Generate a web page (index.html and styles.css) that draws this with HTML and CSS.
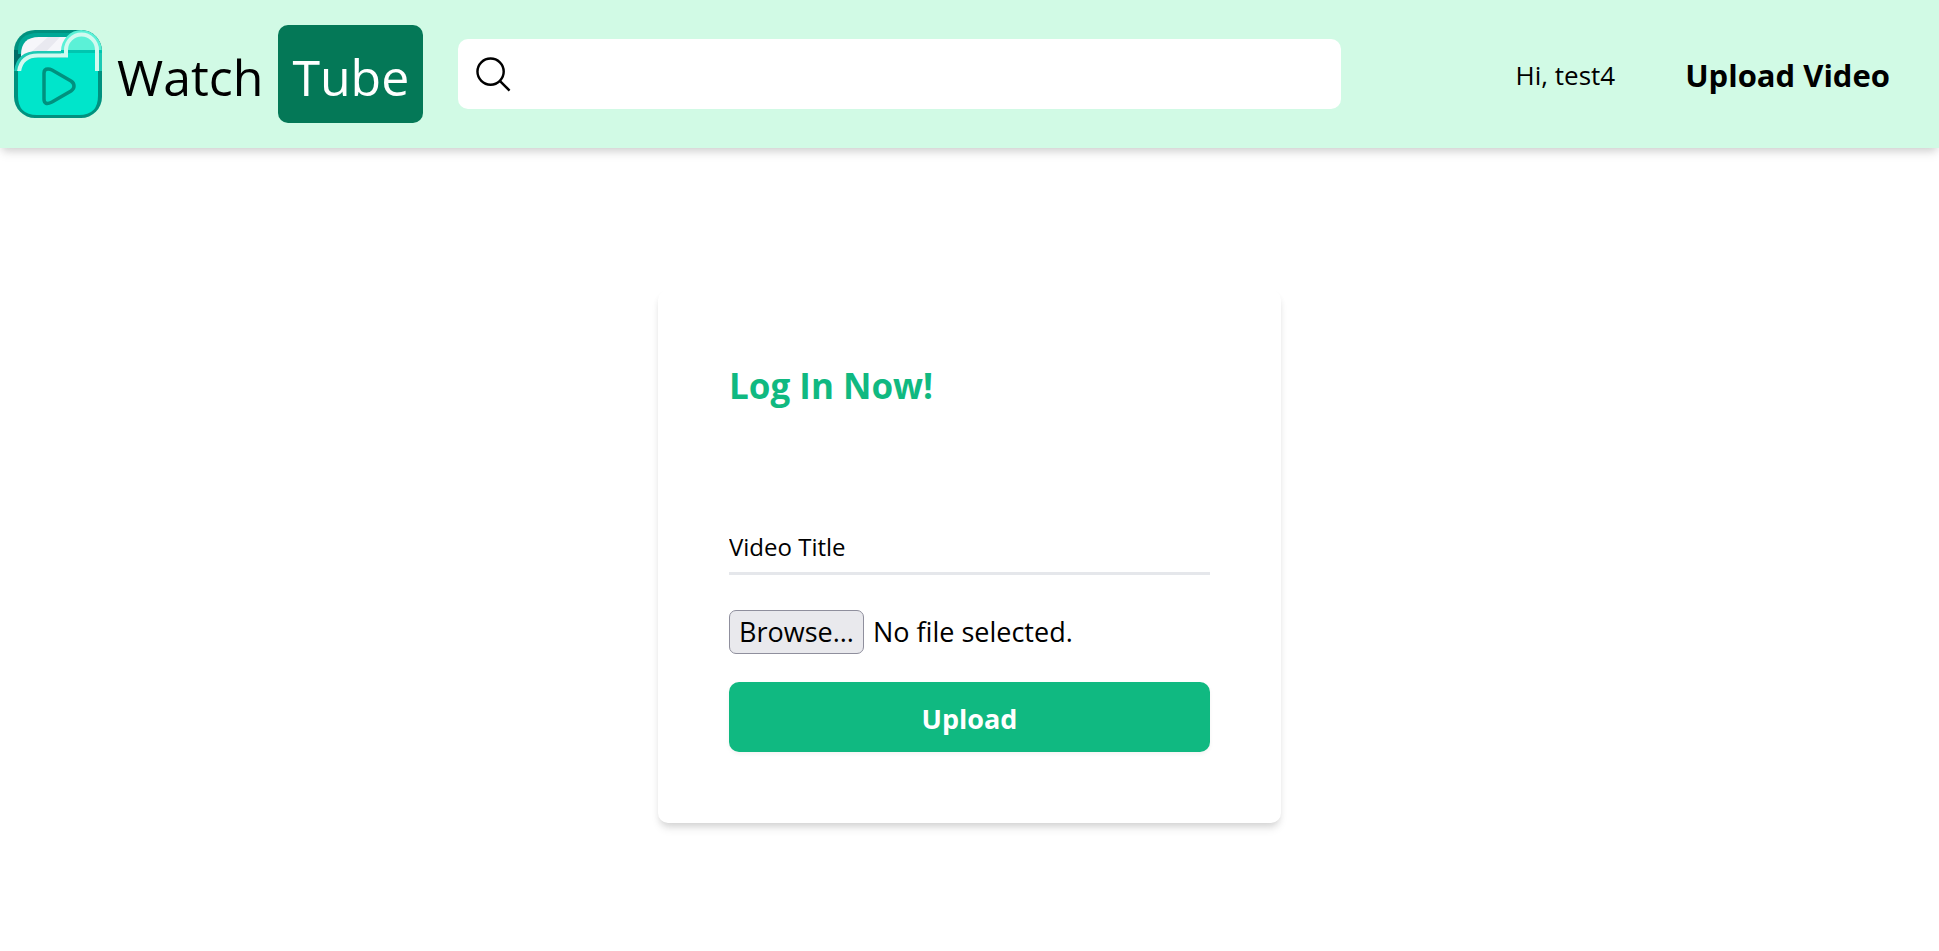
FILE: index.html
```html
<!DOCTYPE html>
<html lang="en">
<head>
<meta charset="utf-8">
<title>Watch Tube</title>
<link rel="stylesheet" href="styles.css">
</head>
<body>
<header class="navbar">
  <a class="brand" href="#">
    <svg class="brand-logo" viewBox="0 0 88 88" aria-hidden="true">
      <defs>
        <clipPath id="tile"><rect width="88" height="88" rx="21"/></clipPath>
        <clipPath id="upper"><rect width="88" height="41"/></clipPath>
      </defs>
      <g clip-path="url(#tile)">
        <rect width="88" height="88" fill="#00917f"/>
        <rect y="20" width="30" height="21" fill="#006d68"/>
        <path d="M4 21Q4 3 24 3H66V24H4z" fill="#00a896"/>
        <path d="M7 26V25Q7 7 25 7H60V30H7z" fill="#f6f6fa"/>
        <path d="M34 7H46L30 24H15z" fill="#e9e9f0"/>
        <path d="M4 42Q4 25 23 25H52Q52 8 68 8T84 24V66Q84 85 65 85H23Q4 85 4 66z" fill="#00e5cb"/>
        <g clip-path="url(#upper)">
          <path d="M0 42Q2 21 24 21H52V28H24Q7 28 5 42z" fill="#1cc9b4"/>
          <path d="M47 24V21a20.500 21 0 0 1 41 0V41H82V21H52V24z" fill="#5bf1d7"/>
          <path d="M52 21V19a15 15 0 0 1 30 0V21z" fill="#5bf1d7"/>
          <rect x="47" y="20" width="41" height="3" fill="#00c6b0"/>
          <rect x="84" y="23" width="4" height="19" fill="#1cc9b4"/>
          <path d="M5 42Q7 25.500 24 25.500H52V20a15.500 15.500 0 0 1 31 0V42" fill="none" stroke="#d1faf0" stroke-width="4"/>
        </g>
        <path d="M30 43Q30 39 34 39Q36 39 38 40L57 51Q60 53 60 56T57 61L38 72Q30 76 30 69z" fill="none" stroke="#00917f" stroke-width="3.500"/>
      </g>
    </svg>
    <span class="brand-first">Watch</span>
    <span class="brand-second">Tube</span>
  </a>
  <form class="search" role="search">
    <label for="q"><svg class="search-icon" viewBox="0 0 36 36" role="img" aria-label="Search"><circle cx="15" cy="15" r="13.500"/><path d="M25 25L34.500 34.500"/></svg></label>
    <input class="search-input" id="q" type="search">
  </form>
  <nav class="links">
    <span class="greeting">Hi, test4</span>
    <a class="upload-link" href="#">Upload Video</a>
  </nav>
</header>
<main class="page">
  <form class="card">
    <h1 class="card-title">Log In Now!</h1>
    <input class="title-input" type="text" placeholder="Video Title" aria-label="Video Title">
    <label class="file">
      <input class="file-input" type="file">
      <span class="file-button">Browse...</span>
      <span class="file-name">No file selected.</span>
    </label>
    <button class="submit" type="button">Upload</button>
  </form>
</main>
</body>
</html>
```

FILE: styles.css
```css
* { box-sizing: border-box; }
body {
  margin: 0;
  min-height: 100vh;
  display: flex;
  flex-direction: column;
  background: #fff;
  color: #000;
  font-family: "Open Sans", "Noto Sans", sans-serif;
  font-size: 27px;
  line-height: 42px;
}
a { color: inherit; text-decoration: none; }
input, button { font: inherit; color: inherit; }

.navbar {
  display: flex;
  align-items: center;
  padding: 25px 49px 25px 14px;
  background: #d1fae5;
  box-shadow: 0 7px 10px -2px rgb(0 0 0 / 0.1), 0 4px 7px -2px rgb(0 0 0 / 0.1);
}
.brand {
  display: flex;
  align-items: center;
  font-size: 50px;
  line-height: 70px;
}
.brand-logo { width: 88px; height: 88px; }
.brand-first { margin: 6px 15px 0; }
.brand-second {
  padding: 17px 14px 11px;
  border-radius: 10px;
  background: #047857;
  color: #fff;
}
.search {
  flex: 0 1 883px;
  display: flex;
  align-items: center;
  gap: 14px;
  height: 70px;
  margin-left: 35px;
  padding: 0 18px;
  border-radius: 10px;
  background: #fff;
}
.search label { display: flex; }
.search-icon {
  width: 35px;
  height: 35px;
  fill: none;
  stroke: #000;
  stroke-width: 2.500;
}
.search-input {
  flex: 1;
  min-width: 0;
  border: 0;
  outline: 0;
  background: none;
}
.links {
  display: flex;
  align-items: center;
  gap: 70px;
  margin-left: auto;
  padding-top: 2px;
}
.greeting { font-size: 26px; }
.upload-link { font-size: 31px; font-weight: 700; }

.page {
  flex: 1;
  display: flex;
  align-items: center;
  justify-content: center;
  padding-top: 14px;
}
.card {
  display: flex;
  flex-direction: column;
  width: 623px;
  padding: 70px 71px 71px;
  border-radius: 10px;
  background: #fff;
  box-shadow: 0 7px 10px -2px rgb(0 0 0 / 0.1), 0 4px 7px -2px rgb(0 0 0 / 0.1);
}
.card-title {
  margin: 0 0 112px;
  color: #10b981;
  font-size: 35px;
  font-weight: 700;
  line-height: 52px;
}
.title-input {
  width: 100%;
  height: 51px;
  margin-bottom: 35px;
  padding: 0 0 3px;
  border: 0;
  border-bottom: 3px solid #e5e7eb;
  outline: 0;
  background: none;
  font-size: 24px;
}
.title-input::placeholder { color: #000; opacity: 1; }
.file {
  position: relative;
  display: flex;
  align-items: center;
  gap: 9px;
  margin-bottom: 28px;
}
.file-input {
  position: absolute;
  inset: 0;
  width: 100%;
  opacity: 0;
}
.file-button {
  padding: 0 9px;
  border: 1px solid #8f8f9d;
  border-radius: 7px;
  background: #e9e9ed;
}
.submit {
  height: 70px;
  padding: 4px 0 0;
  border: 0;
  border-radius: 10px;
  background: #10b981;
  color: #fff;
  font-weight: 700;
  box-shadow: 0 2px 4px rgb(0 0 0 / 0.05);
}
```
